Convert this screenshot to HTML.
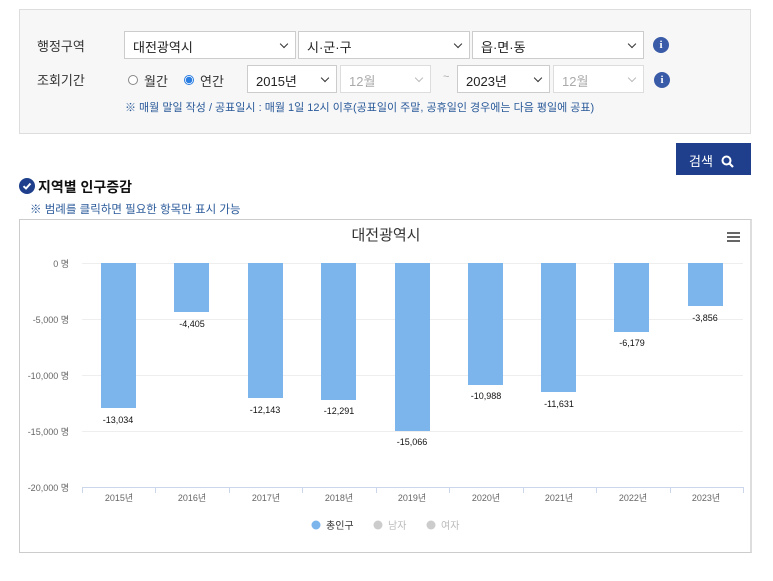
<!DOCTYPE html>
<html><head><meta charset="utf-8"><style>
*{margin:0;padding:0;box-sizing:border-box}
body{width:773px;height:581px;background:#fff;font-family:"Liberation Sans","Noto Sans CJK KR",sans-serif;position:relative;overflow:hidden;color:#222}
.abs{position:absolute}
.box{left:19px;top:9px;width:732px;height:125px;background:#f7f7f7;border:1px solid #ddd}
.lbl{font-size:13px;color:#333}
.sel{position:absolute;height:28px;background:#fff;border:1px solid #ccc;font-size:13px;padding:5px 0 0 8px;color:#222}
.sel.dis{color:#aaa;border-color:#ddd}
.sel:after{content:"";position:absolute;right:8px;top:9px;width:5px;height:5px;border-right:1.5px solid #333;border-bottom:1.5px solid #333;transform:rotate(45deg)}
.sel.dis:after{border-color:#bbb}
.info{position:absolute;width:16px;height:16px;border-radius:50%;background:#3a5ba8;color:#fff;font-size:11px;font-weight:bold;text-align:center;line-height:16px;font-family:"Liberation Serif",serif}
.radio{position:absolute;width:10px;height:10px;border-radius:50%;border:1px solid #888;background:#fff}
</style></head><body>
<div class="abs box"></div>
<div class="abs lbl" style="left:37px;top:36px">행정구역</div>
<div class="abs lbl" style="left:37px;top:70px">조회기간</div>
<div class="sel" style="left:124px;top:31px;width:172px">대전광역시</div>
<div class="sel" style="left:298px;top:31px;width:172px">시·군·구</div>
<div class="sel" style="left:472px;top:31px;width:172px">읍·면·동</div>
<div class="info" style="left:653px;top:37px">i</div>
<div class="radio" style="left:128px;top:75px"></div>
<div class="abs lbl" style="left:144px;top:71px">월간</div>
<div class="radio" style="left:184px;top:75px;border-color:#2a7de1;background:radial-gradient(circle,#2a7de1 55%,#fff 60%)"></div>
<div class="abs lbl" style="left:200px;top:71px">연간</div>
<div class="sel" style="left:247px;top:65px;width:90px">2015년</div>
<div class="sel dis" style="left:340px;top:65px;width:91px">12월</div>
<div class="abs" style="left:443px;top:71px;font-size:11px;color:#aaa">~</div>
<div class="sel" style="left:457px;top:65px;width:93px">2023년</div>
<div class="sel dis" style="left:553px;top:65px;width:91px">12월</div>
<div class="info" style="left:654px;top:72px">i</div>
<div class="abs" style="left:125px;top:99px;font-size:11px;color:#2a5a9a">※ 매월 말일 작성 / 공표일시 : 매월 1일 12시 이후(공표일이 주말, 공휴일인 경우에는 다음 평일에 공표)</div>
<div class="abs" style="left:676px;top:143px;width:75px;height:32px;background:#1f3f8c;color:#fff;font-size:13px;padding:8px 0 0 13px">검색 <svg width="13" height="13" viewBox="0 0 13 13" style="vertical-align:-2px;margin-left:4px"><circle cx="5.5" cy="5.5" r="4" fill="none" stroke="#fff" stroke-width="2"/><path d="M8.5 8.5L12 12" stroke="#fff" stroke-width="2.2"/></svg></div>
<svg class="abs" style="left:19px;top:178px" width="16" height="16"><circle cx="8" cy="8" r="8" fill="#1f3f8c"/><path d="M4.5 8.2L7 10.5L11.5 5.5" stroke="#fff" stroke-width="2" fill="none"/></svg>
<div class="abs" style="left:38px;top:177px;font-size:14px;font-weight:bold;color:#111">지역별 인구증감</div>
<div class="abs" style="left:30px;top:201px;font-size:11.5px;color:#2a5a9a">※ 범례를 클릭하면 필요한 항목만 표시 가능</div>
<div class="abs" style="left:19px;top:219px;width:733px;height:334px;border:1px solid #ccc;border-right:2px solid #ddd"></div>
<svg class="abs" style="left:0;top:0" width="773" height="581" font-family="Liberation Sans,Noto Sans CJK KR,sans-serif">
<text x="386" y="240" font-size="15" fill="#333" text-anchor="middle">대전광역시</text>
<g stroke="#666" stroke-width="2"><path d="M727 233h13M727 237h13M727 241h13"/></g>
<g stroke="#eee" stroke-width="1"><path d="M82 263.5h661M82 319.5h661M82 375.5h661M82 431.5h661"/></g>
<path d="M82 487.5h661" stroke="#ccd6eb"/>
<g stroke="#ccd6eb"><path d="M82.5 487v6M155.5 487v6M229.5 487v6M302.5 487v6M376.5 487v6M449.5 487v6M523.5 487v6M596.5 487v6M670.5 487v6M743.5 487v6"/></g>
<g font-size="9" fill="#666" text-anchor="end"><text x="69" y="267">0 명</text><text x="69" y="323">-5,000 명</text><text x="69" y="379">-10,000 명</text><text x="69" y="435">-15,000 명</text><text x="69" y="491">-20,000 명</text></g>
<g fill="#7cb5ec">
<rect x="101" y="263" width="35" height="145"/>
<rect x="174" y="263" width="35" height="49"/>
<rect x="248" y="263" width="35" height="135"/>
<rect x="321" y="263" width="35" height="137"/>
<rect x="395" y="263" width="35" height="168"/>
<rect x="468" y="263" width="35" height="122"/>
<rect x="541" y="263" width="35" height="129"/>
<rect x="614" y="263" width="35" height="69"/>
<rect x="688" y="263" width="35" height="43"/>
</g>
<g font-size="9" fill="#111" text-anchor="middle">
<text x="118" y="423">-13,034</text><text x="192" y="327">-4,405</text><text x="265" y="413">-12,143</text><text x="339" y="414">-12,291</text><text x="412" y="445">-15,066</text><text x="486" y="399">-10,988</text><text x="559" y="407">-11,631</text><text x="632" y="346">-6,179</text><text x="705" y="321">-3,856</text>
</g>
<g font-size="9" fill="#666" text-anchor="middle">
<text x="119" y="501">2015년</text><text x="192" y="501">2016년</text><text x="266" y="501">2017년</text><text x="339" y="501">2018년</text><text x="412" y="501">2019년</text><text x="486" y="501">2020년</text><text x="559" y="501">2021년</text><text x="633" y="501">2022년</text><text x="706" y="501">2023년</text>
</g>
<circle cx="316" cy="525" r="4.5" fill="#7cb5ec"/><text x="326" y="529" font-size="10" fill="#333">총인구</text>
<circle cx="378" cy="525" r="4.5" fill="#ccc"/><text x="388" y="529" font-size="10" fill="#bbb">남자</text>
<circle cx="431" cy="525" r="4.5" fill="#ccc"/><text x="441" y="529" font-size="10" fill="#bbb">여자</text>
</svg>
</body></html>
